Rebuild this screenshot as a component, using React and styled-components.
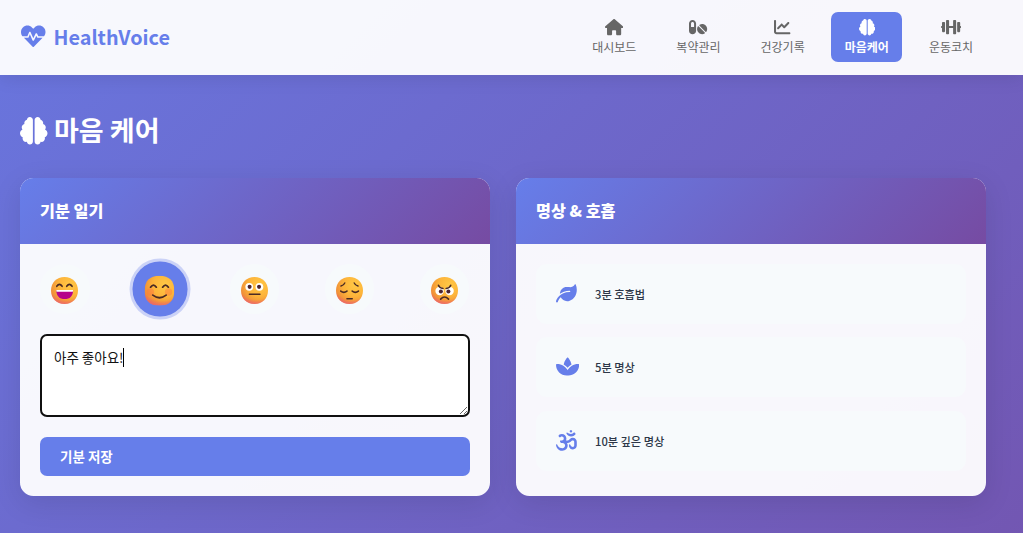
import React from 'react';
import styled, { createGlobalStyle } from 'styled-components';
import { FaHouse, FaPills, FaChartLine, FaBrain, FaSpa, FaOm } from 'react-icons/fa6';
import { FaHeartbeat } from 'react-icons/fa';

const GlobalStyle = createGlobalStyle`
  * { box-sizing: border-box; margin: 0; padding: 0; }
  body {
    font-family: "Noto Sans CJK KR", "Noto Sans", sans-serif;
    color: #333;
    overflow: hidden;
  }
  svg { display: block; flex: none; }
`;

const Page = styled.div`
  height: 100vh;
  overflow: hidden;
  background: linear-gradient(135deg, #667eea 0%, #764ba2 100%) 0 -410px / 1023px 1520px no-repeat;
`;

const Header = styled.header`
  height: 75px;
  padding: 0 36.5px 2px 20px;
  display: flex;
  align-items: center;
  justify-content: space-between;
  background: rgba(255, 255, 255, 0.95);
  box-shadow: 0 2px 18px rgba(0, 0, 0, 0.1);
`;

const Logo = styled.div`
  display: flex;
  align-items: center;
  gap: 8px;
  color: #667eea;
  font-size: 19.8px;
  font-weight: 700;
  line-height: 30px;
  padding-left: 1px;
`;

const Nav = styled.nav`
  display: flex;
  gap: 13.2px;
`;

const NavItem = styled.a`
  width: 71px;
  height: 50px;
  padding-top: 7px;
  display: flex;
  flex-direction: column;
  align-items: center;
  border-radius: 7px;
  font-size: 12px;
  font-weight: ${(p) => (p.$active ? 700 : 400)};
  line-height: 20px;
  color: ${(p) => (p.$active ? '#fff' : '#666')};
  background: ${(p) => (p.$active ? '#667eea' : 'transparent')};
`;

const NavIcon = styled.span`
  height: 18px;
  display: flex;
  align-items: center;
  justify-content: center;
`;

const Main = styled.main`
  padding: 36px 37px 37px 20px;
`;

const Title = styled.h1`
  display: flex;
  align-items: center;
  gap: 6.5px;
  height: 40px;
  margin-bottom: 27px;
  color: #fff;
  font-size: 27px;
  font-weight: 700;
  line-height: 38px;
  span { padding-bottom: 2px; }
`;

const Grid = styled.div`
  display: grid;
  grid-template-columns: 1fr 1fr;
  gap: 26px;
`;

const Card = styled.section`
  height: 318px;
  border-radius: 13.5px;
  overflow: hidden;
  background: rgba(255, 255, 255, 0.95);
  box-shadow: 0 7px 29px rgba(0, 0, 0, 0.1);
`;

const CardHeader = styled.h2`
  height: 66px;
  padding: 0 20px;
  background: linear-gradient(135deg, #667eea, #764ba2);
  color: #fff;
  font-size: 16.2px;
  font-weight: 900;
  line-height: 65px;
`;

const CardBody = styled.div`
  padding: 20px;
`;

const Moods = styled.div`
  display: flex;
  justify-content: space-between;
  padding-right: 0.8px;
  margin-bottom: 20.5px;
`;

const MoodButton = styled.button`
  width: 49.5px;
  height: 49.5px;
  display: flex;
  align-items: center;
  justify-content: center;
  padding-top: 3px;
  border: 0;
  border-radius: 50%;
  background: ${(p) => (p.$active ? '#667eea' : '#f7fafc')};
  transform: ${(p) => (p.$active ? 'scale(1.1)' : 'none')};
  box-shadow: ${(p) => (p.$active ? '0 0 0 2.7px rgba(102, 126, 234, 0.3)' : 'none')};
`;

const NoteField = styled.div`
  position: relative;
  height: 83px;
  margin-bottom: 20px;
`;

const Note = styled.textarea`
  display: block;
  width: 100%;
  height: 83px;
  padding: 11px 12px;
  border: 2px solid #101010;
  border-radius: 7px;
  outline: 0;
  background: #fff;
  color: #111;
  font: 400 13.5px/21px "Noto Sans CJK KR", sans-serif;
  resize: vertical;
`;

const Caret = styled.span`
  position: absolute;
  left: 83px;
  top: 14px;
  width: 1px;
  height: 19px;
  background: #000;
`;

const SaveButton = styled.button`
  display: block;
  width: 100%;
  height: 39px;
  padding: 0 20px;
  border: 0;
  border-radius: 7px;
  background: #667eea;
  color: #fff;
  text-align: left;
  font: 700 13.5px/39px "Noto Sans CJK KR", sans-serif;
`;

const Exercises = styled.div`
  display: flex;
  flex-direction: column;
  gap: 13.4px;
`;

const Exercise = styled.div`
  height: 60px;
  padding: 0 20px 1px;
  display: flex;
  align-items: center;
  border-radius: 11px;
  background: #f7fafc;
  color: #2d3748;
  font-size: 11.2px;
  font-weight: 500;
  line-height: 20px;
  span { padding-top: 1px; }
`;

const ExerciseIcon = styled.div`
  width: 39px;
  color: #667eea;
`;

function Dumbbell({ size }) {
  return (
    <svg width={size} height={size * 0.8} viewBox="0 0 640 512" fill="currentColor">
      <path d="M104 96h-48C42.75 96 32 106.8 32 120V224C14.33 224 0 238.3 0 256c0 17.67 14.33 32 32 32V392C32 405.3 42.75 416 56 416h48C117.3 416 128 405.3 128 392v-272C128 106.8 117.3 96 104 96zM456 32h-48C394.8 32 384 42.75 384 56V224H256V56C256 42.75 245.3 32 232 32h-48C170.8 32 160 42.75 160 56v400C160 469.3 170.8 480 184 480h48C245.3 480 256 469.3 256 456V288h128v168c0 13.25 10.75 24 24 24h48c13.25 0 24-10.75 24-24V56C480 42.75 469.3 32 456 32zM608 224V120C608 106.8 597.3 96 584 96h-48C522.8 96 512 106.8 512 120v272c0 13.25 10.75 24 24 24h48c13.25 0 24-10.75 24-24V288c17.67 0 32-14.33 32-32C640 238.3 625.7 224 608 224z" />
    </svg>
  );
}

function Leaf({ size }) {
  return (
    <svg width={size} height={size} viewBox="0 0 512 512" fill="currentColor">
      <path d="M512 165.4c0 127.9-70.05 235.3-175.3 270.1c-20.04 7.938-41.83 12.46-64.69 12.46c-64.9 0-125.2-36.51-155.7-94.47c-54.13 49.93-68.71 107-68.96 108.1C44.72 472.6 34.87 480 24.02 480c-1.844 0-3.727-.2187-5.602-.6562c-12.89-3.098-20.84-16.08-17.75-28.96c9.598-39.5 90.47-226.4 335.3-226.4C344.8 224 352 216.8 352 208S344.8 192 336 192C228.6 192 151 226.6 96.29 267.6c.1934-10.82 1.242-21.84 3.535-33.05c13.47-65.81 66.04-119 131.4-134.2c28.33-6.562 55.68-6.013 80.93-.0054c56 13.32 118.2-7.412 149.3-61.24c5.664-9.828 20.02-9.516 24.66 .8282C502.7 76.76 512 121.9 512 165.4z" />
    </svg>
  );
}

const ink = { fill: 'none', stroke: '#4b2b24', strokeWidth: 1.9, strokeLinecap: 'round' };

const faces = {
  laugh: (
    <>
      <path d="M6.8 11q3.2-4.6 6.4 0M18.6 11q3.2-4.6 6.4 0" {...ink} />
      <path d="M6.3 15.6H26.2C26.2 22.4 22.4 26.2 16.2 26.2S6.3 22.4 6.3 15.6Z" fill="#b6048a" />
      <path d="M6.3 15.4H26.2L25.9 17.4H6.6Z" fill="#fff" />
    </>
  ),
  smile: (
    <>
      <circle cx="6.2" cy="17.5" r="4" fill="#ff7040" opacity=".4" />
      <circle cx="25.8" cy="17.5" r="4" fill="#ff7040" opacity=".4" />
      <path d="M6.4 12.2q3.1-4.6 6.2 0M19.4 12.2q3.1-4.6 6.2 0" {...ink} />
      <path d="M8.8 20.8q7.2 5.6 14.4 0" {...ink} />
    </>
  ),
  neutral: (
    <>
      <circle cx="9.8" cy="11.7" r="4.6" fill="#fff" />
      <circle cx="21.8" cy="11.7" r="4.6" fill="#fff" />
      <circle cx="10.2" cy="11.7" r="2.4" fill="#4b2430" />
      <circle cx="21.4" cy="11.7" r="2.4" fill="#4b2430" />
      <path d="M10 20.4H22.4" {...ink} />
    </>
  ),
  sad: (
    <>
      <path d="M5.9 10.7q3.2-.8 4.5-3.7M26.1 10.7q-3.2-.8-4.5-3.7" {...ink} strokeWidth={1.6} />
      <path d="M5.6 16.7q3.7 3 7.4 0M19.2 16.7q3.7 3 7.4 0" {...ink} />
      <path d="M13 25.7H19.2" {...ink} />
    </>
  ),
  angry: (
    <>
      <circle cx="10.2" cy="16.6" r="5" fill="#fff" />
      <circle cx="22" cy="16.6" r="5" fill="#fff" />
      <circle cx="11.7" cy="17.2" r="2.4" fill="#4b2430" />
      <circle cx="20.6" cy="17.2" r="2.4" fill="#4b2430" />
      <path d="M8.8 9.8q1.3 3.4 5.4 3.8M23.4 9.8q-1.3 3.4-5.4 3.8" {...ink} />
      <path d="M11.4 26.2q4.7-5 9.4 0" {...ink} />
    </>
  ),
};

const roundHead = 'M16 0C25.3 0 32 6.7 32 16S25.3 32 16 32S0 25.3 0 16S6.7 0 16 0Z';
const softHead = 'M16 0C26.5 0 32 5.5 32 16S26.5 32 16 32S0 26.5 0 16S5.5 0 16 0Z';

function Emoji({ face }) {
  const head = face === 'smile' ? softHead : roundHead;
  return (
    <svg width="27" height="27" viewBox="0 0 32 32">
      <defs>
        <radialGradient id={`skin-${face}`} cx="0.68" cy="0.3" r="0.82">
          <stop offset="0" stopColor="#ffc845" />
          <stop offset="0.5" stopColor="#fdb43a" />
          <stop offset="1" stopColor="#ea7f38" />
        </radialGradient>
        <radialGradient id={`glow-${face}`} cx="0.6" cy="0.1" r="0.95">
          <stop offset="0.78" stopColor="#f0577a" stopOpacity="0" />
          <stop offset="1" stopColor="#ec5a86" stopOpacity="0.8" />
        </radialGradient>
      </defs>
      <path d={head} fill={`url(#skin-${face})`} />
      <path d={head} fill={`url(#glow-${face})`} />
      {faces[face]}
    </svg>
  );
}

const navItems = [
  { label: '대시보드', Icon: FaHouse, size: 18.2 },
  { label: '복약관리', Icon: FaPills, size: 18.2 },
  { label: '건강기록', Icon: FaChartLine, size: 16.4 },
  { label: '마음케어', Icon: FaBrain, size: 16.4, active: true },
  { label: '운동코치', Icon: Dumbbell, size: 20.2 },
];

const moods = ['laugh', 'smile', 'neutral', 'sad', 'angry'];

const exercises = [
  { label: '3분 호흡법', Icon: Leaf, size: 20.8 },
  { label: '5분 명상', Icon: FaSpa, size: 23.2 },
  { label: '10분 깊은 명상', Icon: FaOm, size: 20.8 },
];

export default function App() {
  return (
    <Page>
      <GlobalStyle />
      <Header>
        <Logo>
          <FaHeartbeat size={24.5} />
          HealthVoice
        </Logo>
        <Nav>
          {navItems.map(({ label, Icon, size, active }) => (
            <NavItem key={label} $active={active}>
              <NavIcon>
                <Icon size={size} />
              </NavIcon>
              {label}
            </NavItem>
          ))}
        </Nav>
      </Header>
      <Main>
        <Title>
          <FaBrain size={27.5} />
          <span>마음 케어</span>
        </Title>
        <Grid>
          <Card>
            <CardHeader>기분 일기</CardHeader>
            <CardBody>
              <Moods>
                {moods.map((face) => (
                  <MoodButton key={face} $active={face === 'smile'}>
                    <Emoji face={face} />
                  </MoodButton>
                ))}
              </Moods>
              <NoteField>
                <Note defaultValue="아주 좋아요!" />
                <Caret />
              </NoteField>
              <SaveButton>기분 저장</SaveButton>
            </CardBody>
          </Card>
          <Card>
            <CardHeader>명상 &amp; 호흡</CardHeader>
            <CardBody>
              <Exercises>
                {exercises.map(({ label, Icon, size }) => (
                  <Exercise key={label}>
                    <ExerciseIcon>
                      <Icon size={size} />
                    </ExerciseIcon>
                    <span>{label}</span>
                  </Exercise>
                ))}
              </Exercises>
            </CardBody>
          </Card>
        </Grid>
      </Main>
    </Page>
  );
}
